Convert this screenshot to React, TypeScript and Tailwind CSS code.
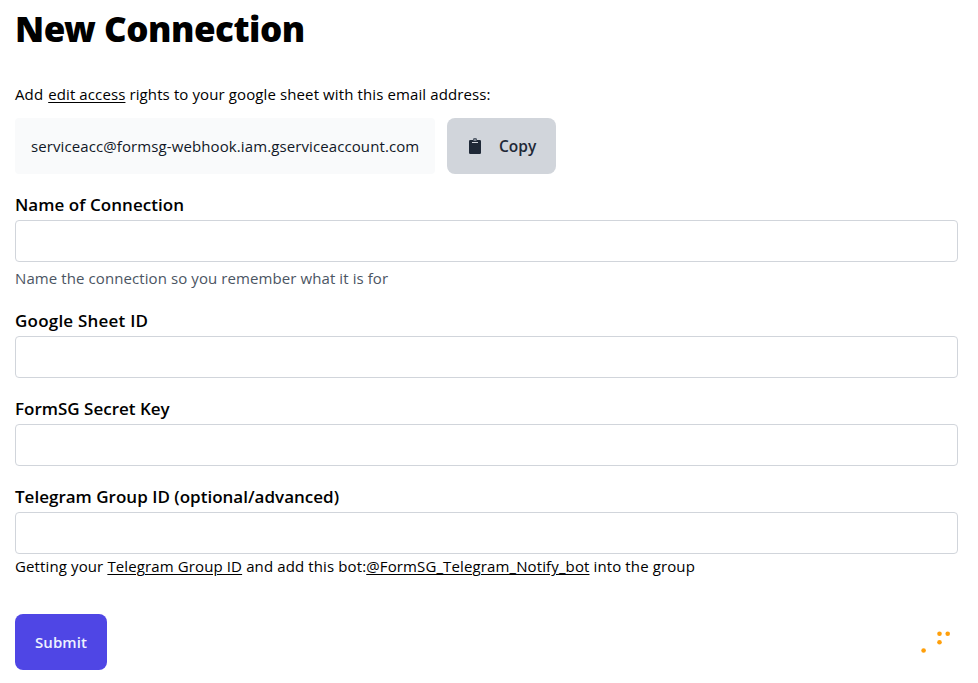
import type { ReactNode } from "react";

function Field({ label, tracking, children }: { label: string; tracking: string; children?: ReactNode }) {
  return (
    <div>
      <label className="block">
        <span className={`block h-6 whitespace-nowrap text-[17px] leading-[26px] font-semibold ${tracking}`}>{label}</span>
        <input className="mt-1 block h-[42px] w-full rounded border border-[#d1d5db] bg-white px-3" />
      </label>
      {children}
    </div>
  );
}

export default function App() {
  return (
    <main className="h-[683px] overflow-hidden bg-white pt-[9px] pr-5 pl-[15px] font-['Open_Sans','Noto_Sans',sans-serif] text-[15px] tracking-[0.1px] text-black">
      <h1 className="font-['Noto_Sans',sans-serif] text-[35px] leading-10 font-black tracking-[-0.5px]">New Connection</h1>
      <p className="mt-[33px] h-6 leading-6 tracking-[0.11px] whitespace-nowrap">
        Add <a className="ml-px underline underline-offset-2">edit access</a> rights to your google sheet with this email address:
      </p>
      <div className="mt-3 flex gap-3">
        <div className="flex h-14 w-[420px] items-center rounded bg-[#f9fafb] px-4 whitespace-nowrap text-[#111827]">
          serviceacc@formsg-webhook.iam.gserviceaccount.com
        </div>
        <button className="flex h-14 w-[109px] items-center rounded-lg bg-[#d1d5db] pl-[21px] font-semibold text-[#1f2937]">
          <svg className="h-4 w-[14px]" viewBox="0 0 14 16" fill="none">
            <rect x="1" y="2" width="12" height="14" rx="1.2" fill="#1f2937" />
            <path d="M5 3V1.2Q5 0 7 0T9 1.2V3Z" fill="#4b5563" />
            <path d="M4 4.5H10" stroke="#d1d5db" />
            <circle cx="7" cy="2" r=".7" fill="#d1d5db" />
          </svg>
          <span className="ml-[17px] pt-0.5 text-[15.5px] tracking-normal">Copy</span>
        </button>
      </div>
      <form className="mt-[18px] flex flex-col gap-[18px]">
        <Field label="Name of Connection" tracking="tracking-[0.05px]">
          <p className="mt-1 h-6 leading-6 tracking-[0.09px] whitespace-nowrap text-[#4b5563]">Name the connection so you remember what it is for</p>
        </Field>
        <Field label="Google Sheet ID" tracking="tracking-[0.22px]" />
        <Field label="FormSG Secret Key" tracking="tracking-normal" />
        <Field label="Telegram Group ID (optional/advanced)" tracking="tracking-[0.01px]">
          <p className="h-6 leading-6 tracking-[0.12px] whitespace-nowrap">
            Getting your <a className="underline underline-offset-2">Telegram Group ID</a> and add this bot:
            <a className="underline underline-offset-2">@FormSG_Telegram_Notify_bot</a> into the group
          </p>
        </Field>
        <div className="mt-[18px] flex items-start justify-between">
          <button type="button" className="h-14 w-[92px] rounded-lg bg-[#4f46e5] font-semibold text-[#eef2ff]">Submit</button>
          <svg className="mt-4 mr-[7px] h-6 w-[30px]" viewBox="0 0 30 24" fill="#ff9f0a">
            <circle cx="2.6" cy="20.5" r="2.3" />
            <circle cx="18.5" cy="3.8" r="2.3" />
            <circle cx="26.7" cy="3.8" r="2.3" />
            <circle cx="18.5" cy="12.2" r="2.3" />
          </svg>
        </div>
      </form>
    </main>
  );
}
